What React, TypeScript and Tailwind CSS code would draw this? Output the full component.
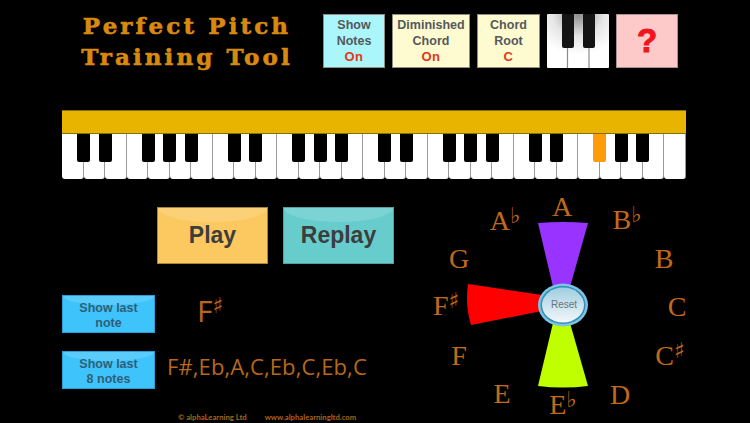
import React from 'react';

const whiteKeys = Array.from({ length: 29 }, (_, i) => i);
// black key sits on the left edge of these white keys
const blackKeys = whiteKeys.filter((i) => [1, 2, 4, 5, 6].includes(i % 7));

const notes = [
  { label: 'A', x: 562, y: 207 },
  { label: 'B', mark: '♭', x: 627, y: 220 },
  { label: 'B', x: 664, y: 259 },
  { label: 'C', x: 677, y: 307 },
  { label: 'C', mark: '♯', x: 670, y: 356 },
  { label: 'D', x: 620, y: 395 },
  { label: 'E', mark: '♭', x: 563, y: 405 },
  { label: 'E', x: 502, y: 394 },
  { label: 'F', x: 459, y: 356 },
  { label: 'F', mark: '♯', x: 446, y: 306 },
  { label: 'G', x: 459, y: 259 },
  { label: 'A', mark: '♭', x: 505, y: 221 },
];

const OptionCard = ({ lines, value, bg, w }: { lines: string[]; value: string; bg: string; w: string }) => (
  <div className={`${bg} ${w} h-[54px] border border-[#8d8d80] flex flex-col items-center pt-[3px] font-['Liberation_Sans',sans-serif] font-bold text-[12.5px] leading-[15.5px] text-[#55595c]`}>
    {lines.map((l) => (
      <span key={l}>{l}</span>
    ))}
    <span className="text-[#e5361a] text-[13px] tracking-[0.5px]">{value}</span>
  </div>
);

const GlossButton = ({ label, bg, border }: { label: string; bg: string; border: string }) => (
  <button className={`${bg} ${border} relative w-[111px] h-[57px] border overflow-hidden font-['Liberation_Sans',sans-serif] font-bold text-[23px] text-[#3d3d3d]`}>
    <span className="absolute top-0 inset-x-0 h-[14px] rounded-b-[50%_100%] bg-white/15"></span>
    <span className="relative">{label}</span>
  </button>
);

const ShowButton = ({ lines }: { lines: string[] }) => (
  <button className="relative w-[93px] h-[38px] pt-[4px] bg-[#3ec4fb] border border-[#2a9fd6] overflow-hidden font-['Liberation_Sans',sans-serif] font-bold text-[12.5px] leading-[15px] text-[#2f5f78]">
    <span className="absolute top-0 inset-x-0 h-[9px] rounded-b-[50%_100%] bg-white/15"></span>
    <span className="relative block">{lines[0]}</span>
    <span className="relative block">{lines[1]}</span>
  </button>
);

const PianoIcon = () => (
  <svg width="62" height="54" viewBox="0 0 62 54" className="shrink-0">
    <defs>
      <radialGradient id="shine" cx="0.5" cy="0" r="0.75">
        <stop offset="0" stopColor="#8c8c8c" />
        <stop offset="0.55" stopColor="#e6e6e6" />
        <stop offset="1" stopColor="#ffffff" />
      </radialGradient>
    </defs>
    <rect x="0" y="0" width="62" height="54" rx="1" fill="url(#shine)" />
    <path d="M20.5 30V54M42 30V54" stroke="#8a8a8a" strokeWidth="1.2" />
    <rect x="15" y="-2" width="12" height="36" rx="2" fill="#141414" />
    <rect x="36" y="-2" width="12" height="36" rx="2" fill="#141414" />
  </svg>
);

const Wheel = () => (
  <svg width="132" height="170" viewBox="0 0 132 170" className="absolute left-[464px] top-[221px]">
    <defs>
      <linearGradient id="cap" x1="0" y1="0" x2="0" y2="1">
        <stop offset="0" stopColor="#9fcde0" />
        <stop offset="0.55" stopColor="#cfe5ee" />
        <stop offset="1" stopColor="#f2f8fa" />
      </linearGradient>
    </defs>
    <path d="M74 2Q99 0 124 2L106 66H89Z" fill="#9933ff" />
    <path d="M4 63Q1 84 7 104L78 90V74Z" fill="#ff0000" />
    <path d="M89 102H106L124 165Q99 168 74 165Z" fill="#bfff00" />
    <ellipse cx="99" cy="84" rx="25" ry="21.5" fill="#7cc4e2" />
    <ellipse cx="99" cy="84" rx="22.5" ry="19" fill="#2f8fb8" />
    <ellipse cx="99" cy="84" rx="21" ry="17.5" fill="url(#cap)" />
  </svg>
);

export default function App() {
  return (
    <div className="relative w-[750px] h-[423px] bg-black overflow-hidden">
      <div className="flex items-start pt-[14px] pl-[81px]">
        <div className="w-[212px] h-[54px] mr-[30px] -mt-[4px] text-center font-['DejaVu_Serif',serif] font-bold text-[23px] tracking-[3.1px] leading-[31px] text-[#d8890f] whitespace-nowrap [-webkit-text-stroke:0.6px_#d8890f]">
          <div>Perfect Pitch</div>
          <div>Training Tool</div>
        </div>
        <div className="flex gap-[7px]">
          <OptionCard lines={['Show', 'Notes']} value="On" bg="bg-[#aaf6fb]" w="w-[62px]" />
          <OptionCard lines={['Diminished', 'Chord']} value="On" bg="bg-[#fdfbcf]" w="w-[78px]" />
          <OptionCard lines={['Chord', 'Root']} value="C" bg="bg-[#fdfbcf]" w="w-[63px]" />
          <PianoIcon />
          <div className="w-[62px] h-[54px] bg-[#fdc9c9] border border-[#a89090] flex items-center justify-center font-['Liberation_Sans',sans-serif] font-black text-[33px] text-[#f0141e] [-webkit-text-stroke:1px_#f0141e]">
            ?
          </div>
        </div>
      </div>

      <div className="ml-[62px] mt-[42px] w-[624px]">
        <div className="h-[24px] bg-[#e8b400] border-y border-[#8a6c10]"></div>
        <div className="relative flex h-[45px]">
          {whiteKeys.map((i) => (
            <div key={i} className="flex-1 bg-white border-r-[1.5px] border-[#999999] last:border-r-0 rounded-b-[3px]"></div>
          ))}
          {blackKeys.map((i) => (
            <div
              key={i}
              className={`absolute top-0 w-[13px] h-[28px] rounded-b-[2px] ${i === 25 ? 'bg-[#ff9c0a]' : 'bg-black'}`}
              style={{ left: (i * 624) / 29 - 6.5 }}
            ></div>
          ))}
        </div>
      </div>

      <div className="flex gap-[15px] pl-[157px] mt-[28px]">
        <GlossButton label="Play" bg="bg-[#fcc860]" border="border-[#a8853f]" />
        <GlossButton label="Replay" bg="bg-[#66cccc]" border="border-[#5a9f9f]" />
      </div>

      <div className="flex items-center pl-[62px] mt-[31px]">
        <ShowButton lines={['Show last', 'note']} />
        <div className="ml-[42px] pb-[6px] font-['Open_Sans',sans-serif] text-[30px] leading-none text-[#b8681a]">
          F<sup className="font-['DejaVu_Sans',sans-serif] text-[22px] -top-[9px]">♯</sup>
        </div>
      </div>
      <div className="flex items-center pl-[62px] mt-[18px]">
        <ShowButton lines={['Show last', '8 notes']} />
        <div className="ml-[12px] pb-[8px] font-['Open_Sans',sans-serif] text-[22px] tracking-[0.1px] leading-none text-[#b8681a]">
          F#,Eb,A,C,Eb,C,Eb,C
        </div>
      </div>
      <div className="flex gap-[18px] pl-[178px] mt-[25px] font-['Lato',sans-serif] font-bold text-[7.7px] leading-none text-[#a8651a]">
        <span>© alphaLearning Ltd</span>
        <span>www.alphalearningltd.com</span>
      </div>

      <Wheel />
      <span className="absolute left-[551px] top-[299px] font-['Liberation_Sans',sans-serif] text-[10px] leading-[12px] text-[#66757f]">
        Reset
      </span>
      {notes.map((n, i) => (
        <span
          key={i}
          className="absolute -translate-x-1/2 -translate-y-1/2 font-['Liberation_Serif',serif] text-[28px] leading-none text-[#c2691a] whitespace-nowrap"
          style={{ left: n.x, top: n.y }}
        >
          {n.label}
          {n.mark && <sup className="font-['DejaVu_Sans',sans-serif] text-[22px] -top-[7px]">{n.mark}</sup>}
        </span>
      ))}
    </div>
  );
}
